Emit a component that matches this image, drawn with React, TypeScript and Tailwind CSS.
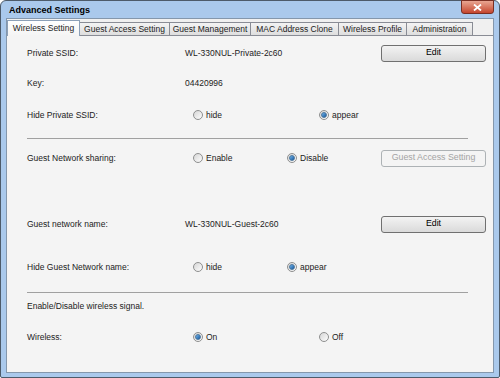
import React from 'react';

const tabs = [
  { name: 'Wireless Setting', w: 'w-[73px]', active: true },
  { name: 'Guest Access Setting', w: 'w-[90px]' },
  { name: 'Guest Management', w: 'w-[81px]' },
  { name: 'MAC Address Clone', w: 'w-[88px]' },
  { name: 'Wireless Profile', w: 'w-[68px]' },
  { name: 'Administration', w: 'w-[66px]' },
];

function Radio({ checked, label }: { checked?: boolean; label: string }) {
  return (
    <span className="flex items-center gap-[3px]">
      <span className="flex h-[10px] w-[10px] items-center justify-center rounded-full border border-[#8e8f8f] bg-gradient-to-br from-[#d6d6d6] to-[#fdfdfd]">
        {checked && (
          <span className="h-[6px] w-[6px] rounded-full border border-[#4a759c] bg-gradient-to-br from-[#6fb4ee] to-[#14589c]" />
        )}
      </span>
      <span>{label}</span>
    </span>
  );
}

function Button({ label, disabled }: { label: string; disabled?: boolean }) {
  if (disabled) {
    return (
      <div className="flex h-[17px] w-[105px] items-center justify-center rounded-[3px] border border-[#adb2b5] bg-[#f4f4f4] text-[8.8px] text-[#a3a3a3]">
        {label}
      </div>
    );
  }
  return (
    <div className="flex h-[17px] w-[105px] items-center justify-center rounded-[3px] border border-[#707070] bg-gradient-to-b from-[#f3f3f3] to-[#dadada] text-[8.8px] text-black">
      {label}
    </div>
  );
}

function Row({ label, className, children }: { label: string; className: string; children?: React.ReactNode }) {
  return (
    <div className={`flex h-[18px] items-center ${className}`}>
      <div className="w-[158px]">{label}</div>
      {children}
    </div>
  );
}

function Separator({ className }: { className: string }) {
  return <div className={`ml-[20px] h-px w-[441px] bg-[#a0a0a0] ${className}`} />;
}

export default function App() {
  return (
    <div className="flex h-[378px] w-[500px] flex-col rounded-t-[6px] rounded-b-[2px] border border-[#4d5b6a] bg-[#aac9ec] px-[5px] pb-[4px] font-['Liberation_Sans',Arial,sans-serif] text-[8.5px] text-[#222]">
      {/* title bar */}
      <div className="flex h-[17px] items-start justify-between">
        <span className="pl-[3px] pt-[3px] text-[9px] font-bold text-black">Advanced Settings</span>
        <div className="-mt-px flex h-[14px] w-[33px] items-center justify-center rounded-b-[3px] border border-[#7a2e22] bg-gradient-to-b from-[#e8a592] to-[#c4432c]">
          <svg width="9" height="7" viewBox="0 0 9 7">
            <path d="M1 0.5 L8 6.5 M8 0.5 L1 6.5" stroke="#fff" strokeWidth="1.8" />
          </svg>
        </div>
      </div>

      {/* client area */}
      <div className="flex flex-1 flex-col border border-[#8497ac] bg-[#f0f0f0]">
        <div className="mt-px flex h-[15px] items-end">
          {tabs.map((t) =>
            t.active ? (
              <div
                key={t.name}
                className={`relative z-10 -mb-px flex h-[16px] ${t.w} items-center justify-center border-x border-t border-[#8ca0b8] bg-gradient-to-b from-[#ffffff] to-[#f4f4f4] pb-px`}
              >
                {t.name}
              </div>
            ) : (
              <div
                key={t.name}
                className={`flex h-[13px] ${t.w} items-center justify-center border-r border-t border-[#898c95] bg-gradient-to-b from-[#f3f3f3] to-[#dedede]`}
              >
                {t.name}
              </div>
            )
          )}
        </div>

        <div className="flex flex-1 flex-col border-t border-[#898c95] bg-[#f4f4f4] pl-[20px]">
          <Row label="Private SSID:" className="mt-[8px]">
            <div className="w-[196px]">WL-330NUL-Private-2c60</div>
            <Button label="Edit" />
          </Row>
          <Row label="Key:" className="mt-[12px]">
            <div>04420996</div>
          </Row>
          <Row label="Hide Private SSID:" className="mt-[14px]">
            <div className="w-[134px] pl-[8px]">
              <Radio label="hide" />
            </div>
            <Radio checked label="appear" />
          </Row>
          <div className="-ml-[20px]">
            <Separator className="mt-[14px]" />
          </div>
          <Row label="Guest Network sharing:" className="mt-[10px]">
            <div className="w-[102px] pl-[8px]">
              <Radio label="Enable" />
            </div>
            <div className="w-[94px]">
              <Radio checked label="Disable" />
            </div>
            <Button label="Guest Access Setting" disabled />
          </Row>
          <Row label="Guest network name:" className="mt-[48px]">
            <div className="w-[196px]">WL-330NUL-Guest-2c60</div>
            <Button label="Edit" />
          </Row>
          <Row label="Hide Guest Network name:" className="mt-[25px]">
            <div className="w-[102px] pl-[8px]">
              <Radio label="hide" />
            </div>
            <Radio checked label="appear" />
          </Row>
          <div className="-ml-[20px]">
            <Separator className="mt-[16px]" />
          </div>
          <div className="mt-[4px] flex h-[18px] items-center">Enable/Disable wireless signal.</div>
          <Row label="Wireless:" className="mt-[13px]">
            <div className="w-[134px] pl-[8px]">
              <Radio checked label="On" />
            </div>
            <Radio label="Off" />
          </Row>
        </div>
      </div>
    </div>
  );
}
